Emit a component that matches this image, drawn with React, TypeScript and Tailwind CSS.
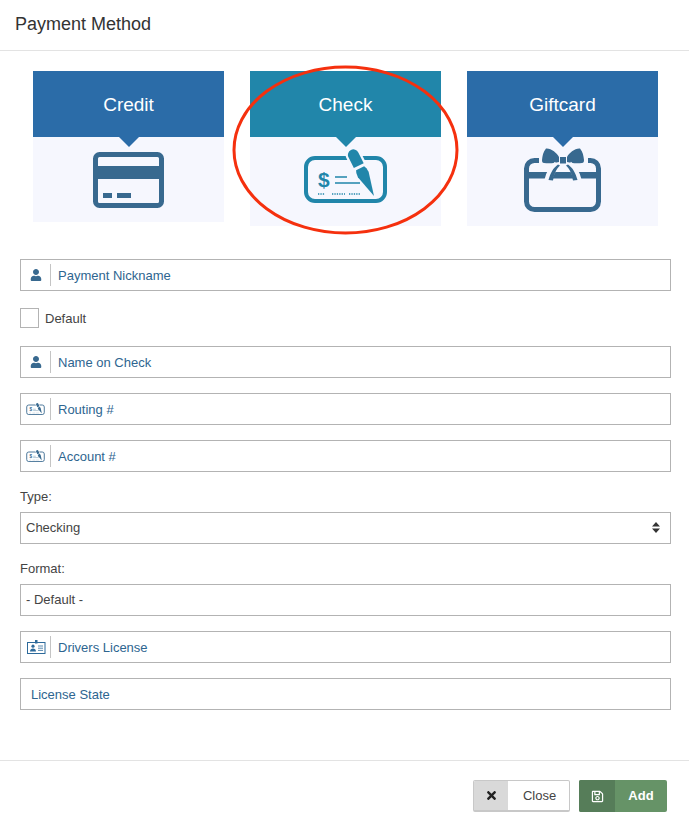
import type { ReactNode } from "react";
import { FaRegSave, FaTimes, FaUser } from "react-icons/fa";

function CreditIcon() {
  return (
    <svg width="71" height="56" viewBox="0 0 71 56" className="text-[#38698f]">
      <rect x="2.5" y="2.5" width="66" height="51" rx="4" fill="none" stroke="currentColor" strokeWidth="5" />
      <rect x="2" y="14" width="67" height="13" fill="currentColor" />
      <rect x="10" y="41" width="9" height="5" fill="currentColor" />
      <rect x="24" y="41" width="14" height="5" fill="currentColor" />
    </svg>
  );
}

function CheckIcon({ small, halo }: { small?: boolean; halo: string }) {
  return (
    <svg
      width={small ? 19 : 83}
      height={small ? 12 : 54}
      viewBox="0 0 83 54"
      className={small ? "text-[#38698f]" : "text-[#2186aa]"}
    >
      <rect x="2" y="9" width="79" height="43" rx="9" fill="none" stroke="currentColor" strokeWidth="4" />
      <text x="14" y="38" fontSize="21" fontWeight="700" fill="currentColor" fontFamily="Liberation Sans, sans-serif">
        $
      </text>
      <path d="M31 28h12M31 34h25" stroke="currentColor" strokeWidth="1.6" />
      <path
        d="M14 45h7M28 45h13M45 45h11"
        stroke="currentColor"
        strokeWidth="1.6"
        strokeDasharray="1.3 1.1"
      />
      <g transform="translate(70 47) rotate(-26.6)">
        <path
          d="M-5.5 -22 L-6 -31 H6 L5.5 -22 Z M-5.5 -33 V-46 A5.5 5.5 0 0 1 5.5 -46 V-33 Z"
          fill={halo}
          stroke={halo}
          strokeWidth="4.5"
          strokeLinejoin="round"
        />
        <path d="M0 0 L-6 -24 Q-6 -29 -4.5 -31 H4.5 Q6 -29 6 -24 Z" fill="currentColor" />
        <path d="M-5.5 -34 V-46 A5.5 5.5 0 0 1 5.5 -46 V-34 Z" fill="currentColor" />
      </g>
    </svg>
  );
}

function GiftIcon() {
  const halo = "#f6f7fe";
  return (
    <svg width="77" height="64" viewBox="0 0 77 64" className="text-[#38698f]">
      <rect x="2.5" y="12.5" width="72" height="49" rx="8" fill="none" stroke="currentColor" strokeWidth="5" />
      <rect x="5" y="24" width="67" height="6.5" fill="currentColor" />
      <path d="M15 6H64V20H15Z" fill={halo} />
      <path d="M22 0.5 C27 0 33 5 35 9 V14 C30 15.5 24 15.5 20 15 C18.5 15 18 14 18 12 C18.5 8 19 4 22 0.5Z" fill="currentColor" />
      <path d="M56 0.5 C51 0 45 5 43 9 V14 C48 15.5 54 15.5 58 15 C59.5 15 60 14 60 12 C59.5 8 59 4 56 0.5Z" fill="currentColor" />
      <rect x="36" y="9" width="6" height="6.5" fill="currentColor" />
      <path d="M33 17 C28 20 26 25 24 33" fill="none" stroke={halo} strokeWidth="7.5" />
      <path d="M45 17 C50 20 52 25 54 33" fill="none" stroke={halo} strokeWidth="7.5" />
      <path d="M34 16.5 C29 20 26.5 25 24.5 32 L29 32.5 C30 27 32 21 36 17.5Z" fill="currentColor" />
      <path d="M44 16.5 C49 20 51.5 25 53.5 32 L49 32.5 C48 27 46 21 42 17.5Z" fill="currentColor" />
    </svg>
  );
}

function LicenseIcon() {
  return (
    <svg width="19" height="14" viewBox="0 0 19 14" className="ml-px text-[#2d6a9b]">
      <rect x="0.5" y="2.5" width="17.5" height="11" fill="none" stroke="currentColor" strokeWidth="1" />
      <rect x="8" y="0" width="2.5" height="3.5" fill="currentColor" />
      <circle cx="6" cy="6.2" r="1.6" fill="currentColor" />
      <path d="M3 11.5c0-2 1.4-3 3-3s3 1 3 3z" fill="currentColor" />
      <path d="M11 6h5M11 8.2h5M11 10.4h5" stroke="currentColor" strokeWidth="0.8" />
    </svg>
  );
}

function MethodCard({
  title,
  active,
  bodyClass,
  children,
}: {
  title: string;
  active?: boolean;
  bodyClass: string;
  children: ReactNode;
}) {
  return (
    <div className="flex flex-col">
      <div
        className={`relative flex h-[66px] items-center justify-center pt-[2px] text-[19px] text-white ${
          active ? "bg-[#2186aa]" : "bg-[#2b6ca8]"
        }`}
      >
        {title}
        <div
          className={`absolute top-full left-1/2 -ml-[10px] h-0 w-0 border-x-[10px] border-t-[10px] border-x-transparent ${
            active ? "border-t-[#2186aa]" : "border-t-[#2b6ca8]"
          }`}
        />
      </div>
      <div className={`flex justify-center bg-[#f6f7fe] ${bodyClass}`}>{children}</div>
    </div>
  );
}

function Field({ icon, placeholder }: { icon?: ReactNode; placeholder: string }) {
  return (
    <div className="flex h-8 items-center border border-[#b3b3b3] bg-white">
      {icon && (
        <div className="flex h-[22px] w-[30px] shrink-0 items-center justify-center border-r border-[#c4c4c4]">
          {icon}
        </div>
      )}
      <input
        type="text"
        placeholder={placeholder}
        className={`h-full w-full bg-transparent pr-2 text-[13px] outline-none placeholder:text-[#2e6590] ${
          icon ? "pl-[7px]" : "pl-[10px]"
        }`}
      />
    </div>
  );
}

function SelectBox({ value, arrows }: { value: string; arrows?: boolean }) {
  return (
    <div className="relative h-8 border border-[#b3b3b3] bg-white">
      <select className="h-full w-full appearance-none bg-transparent pl-[5px] text-[13px] text-[#444444] outline-none">
        <option>{value}</option>
      </select>
      {arrows && (
        <svg
          width="8"
          height="11"
          viewBox="0 0 8 11"
          className="pointer-events-none absolute top-[9px] right-[10px] text-[#333333]"
        >
          <path d="M4 0L8 4.5H0zM0 6.5h8L4 11z" fill="currentColor" />
        </svg>
      )}
    </div>
  );
}

const userIcon = <FaUser className="text-[12px] text-[#38698f]" />;
const checkIcon = <CheckIcon small halo="#ffffff" />;

export default function App() {
  return (
    <div className="relative h-[830px] bg-white font-['Liberation_Sans',sans-serif]">
      <header className="flex h-[51px] items-center border-b border-[#e3e3e3] pb-[1px] pl-[15px] text-[18px] text-[#333333]">
        Payment Method
      </header>

      <div className="grid grid-cols-[191px_191px_191px] items-start gap-x-[26px] px-[33px] pt-5">
        <MethodCard title="Credit" bodyClass="h-[85px] pt-[15px]">
          <CreditIcon />
        </MethodCard>
        <MethodCard title="Check" active bodyClass="h-[89px] pt-3">
          <CheckIcon halo="#f6f7fe" />
        </MethodCard>
        <MethodCard title="Giftcard" bodyClass="h-[89px] pt-[11px]">
          <GiftIcon />
        </MethodCard>
      </div>

      <svg width="228" height="170" viewBox="0 0 228 170" className="pointer-events-none absolute top-[65px] left-[232px]">
        <ellipse cx="113.5" cy="85" rx="111.5" ry="83" fill="none" stroke="#f5300e" strokeWidth="3" />
      </svg>

      <form className="mt-[33px] mr-[18px] ml-5 flex flex-col text-[13px] text-[#444444]">
        <Field icon={userIcon} placeholder="Payment Nickname" />
        <label className="mt-[17px] flex h-5 items-center gap-[6px]">
          <input type="checkbox" className="h-[20px] w-[19px] appearance-none border border-[#b3b3b3] bg-white" />
          <span className="pt-[1px] leading-4">Default</span>
        </label>
        <div className="mt-[18px]">
          <Field icon={userIcon} placeholder="Name on Check" />
        </div>
        <div className="mt-[15px]">
          <Field icon={checkIcon} placeholder="Routing #" />
        </div>
        <div className="mt-[15px]">
          <Field icon={checkIcon} placeholder="Account #" />
        </div>
        <div className="mt-[17px] mb-[7px] h-4 leading-4">Type:</div>
        <SelectBox value="Checking" arrows />
        <div className="mt-[17px] mb-[7px] h-4 leading-4">Format:</div>
        <SelectBox value="- Default -" />
        <div className="mt-[15px]">
          <Field icon={<LicenseIcon />} placeholder="Drivers License" />
        </div>
        <div className="mt-[15px]">
          <Field placeholder="License State" />
        </div>
      </form>

      <footer className="mt-[50px] flex h-[70px] items-start justify-end gap-[9px] border-t border-[#e3e3e3] pt-[19px] pr-[22px] text-[13px]">
        <button type="button" className="flex h-8 w-[97px] overflow-hidden rounded-[2px] border border-b-2 border-[#c8c8c8] bg-white text-[#444444]">
          <span className="flex h-full w-[34px] items-center justify-center bg-[#d9d9d9] text-[#222222]">
            <FaTimes className="text-[13px]" />
          </span>
          <span className="flex h-full flex-1 items-center justify-center pl-[2px]">Close</span>
        </button>
        <button type="button" className="flex h-8 w-[88px] overflow-hidden rounded-[2px] bg-[#669367] font-bold text-white">
          <span className="flex h-full w-[36px] items-center justify-center bg-[#567d59]">
            <FaRegSave className="text-[13px]" />
          </span>
          <span className="flex h-full flex-1 items-center justify-center">Add</span>
        </button>
      </footer>
    </div>
  );
}
